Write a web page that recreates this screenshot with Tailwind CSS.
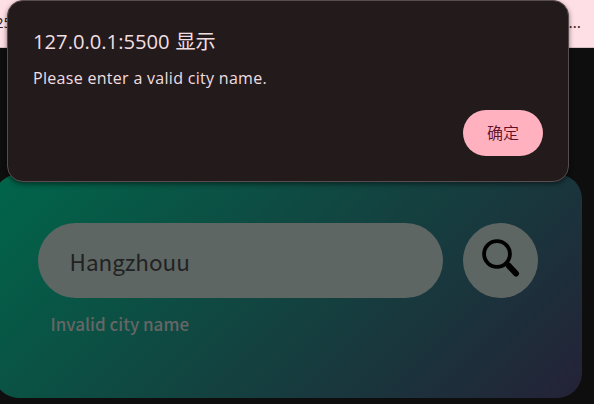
<!DOCTYPE html>
<html lang="zh-CN">
<head>
<meta charset="utf-8">
<title>Weather</title>
<script src="https://cdn.jsdelivr.net/npm/@tailwindcss/browser@4"></script>
</head>
<body class="overflow-hidden bg-[#0e0e0e] font-['Noto_Sans_CJK_SC',sans-serif]">
<div class="relative h-[404px] w-[594px] overflow-hidden">
  <header class="flex h-12 justify-between border-b border-[#d5bfc3] bg-[#ffdfe6] pt-[12px] font-['Open_Sans',sans-serif] text-[16px] leading-5 text-[#2b2023]">
    <span class="-ml-[5px] text-[15px]">25</span>
    <span class="mr-[13px]">…</span>
  </header>
  <main class="mt-[126px] -ml-[6px] h-[224px] w-[588px] rounded-[25px] bg-[linear-gradient(135deg,#00664a,#242237)] px-[44px] pt-[49px]">
    <div class="flex justify-between">
      <div class="flex h-[75px] w-[405px] items-center rounded-full bg-[#5e6664] pl-[31.5px] pt-[3px] text-[22.5px] text-[#222]">Hangzhouu</div>
      <button class="flex size-[75px] items-center justify-center rounded-full bg-[#5e6664]" aria-label="Search">
        <svg class="mb-[5px] size-[38px]" viewBox="0 0 38 38" fill="none" stroke="#000"><circle cx="15" cy="15" r="12.9" stroke-width="3.8"/><path d="M24.5 24.5L27 27" stroke-width="5"/><path d="M27 27L34 34.5" stroke-width="6" stroke-linecap="round"/></svg>
      </button>
    </div>
    <p class="mt-[13px] ml-[12.5px] text-[17px] leading-[26px] font-medium text-[#666]">Invalid city name</p>
  </main>
  <section role="dialog" class="absolute top-0 left-[7px] flex h-[182px] w-[562px] flex-col rounded-[16px] border border-[#584c4f] bg-[#231a1b] px-[25px] text-[#f1dee1] shadow-[0_2px_5px_rgba(0,0,0,0.5)]">
    <h1 class="mt-[26px] font-['Open_Sans','Noto_Sans_CJK_SC',sans-serif] text-[20.2px] leading-7 [word-spacing:0.5px]">127.0.0.1:5500 显示</h1>
    <p class="mt-[11px] font-['Open_Sans',sans-serif] text-[16px] leading-6 tracking-[0.3px]">Please enter a valid city name.</p>
    <button class="mt-5 h-[46px] w-20 self-end rounded-full bg-[#ffb1c0] pb-[2px] text-[16px] font-[350] text-[#5f1129]">确定</button>
  </section>
</div>
</body>
</html>
